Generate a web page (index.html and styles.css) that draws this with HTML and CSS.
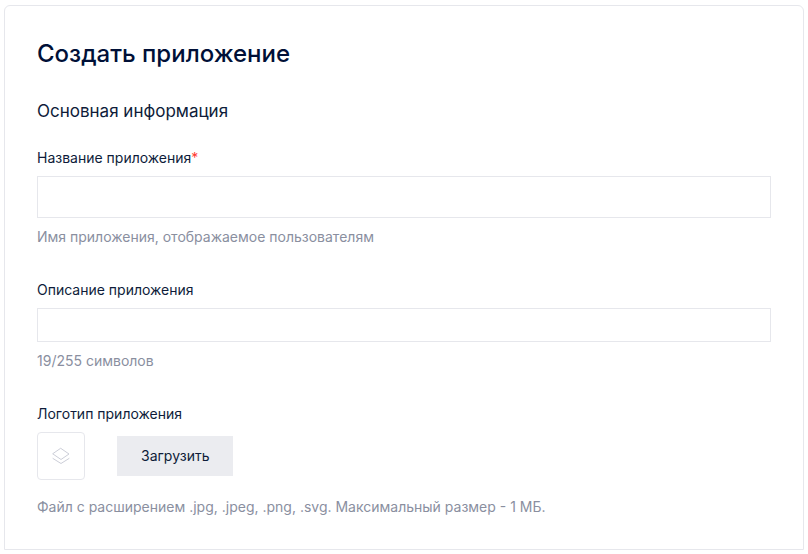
FILE: index.html
```html
<!DOCTYPE html>
<html lang="ru">
<head>
  <meta charset="UTF-8">
  <meta name="viewport" content="width=device-width, initial-scale=1.0">
  <title>Создать приложение</title>
  <link rel="stylesheet" href="styles.css">
</head>
<body>

  <main class="card">
    <h1>Создать приложение</h1>
    <h2>Основная информация</h2>

    <form>
      <!-- App name -->
      <div class="field">
        <label for="app-name">Название приложения<span class="required">*</span></label>
        <input type="text" id="app-name" class="input input-large" required>
        <p class="hint">Имя приложения, отображаемое пользователям</p>
      </div>

      <!-- App description -->
      <div class="field">
        <label for="app-description">Описание приложения</label>
        <input type="text" id="app-description" class="input" maxlength="255">
        <p class="hint">19/255 символов</p>
      </div>

      <!-- App logo -->
      <div class="field">
        <span class="label">Логотип приложения</span>
        <div class="upload">
          <div class="preview">
            <svg width="20" height="20" viewBox="0 0 20 20" fill="none" stroke="#ccced8" stroke-linejoin="round" stroke-linecap="round">
              <path d="M10 2.5 L18 8 L10 13.5 L2 8 Z"/>
              <path d="M2 12.5 L10 17.5 L18 12.5"/>
            </svg>
          </div>
          <button type="button" class="upload-btn">Загрузить</button>
        </div>
        <p class="hint">Файл с расширением .jpg, .jpeg, .png, .svg. Максимальный размер - 1 МБ.</p>
      </div>
    </form>
  </main>

</body>
</html>
```
FILE: styles.css
```css
* {
  margin: 0;
  padding: 0;
  box-sizing: border-box;
}

body {
  padding: 5px 4px 4px;
  background-color: #fff;
  color: #0e1c3a;
  font-family: 'Inter', sans-serif;
  font-size: 14px;
  line-height: 20px;
}

.card {
  padding: 32px;
  border: 1px solid #e6e7ec;
  border-radius: 6px 6px 0 0;
}

h1 {
  margin-bottom: 29px;
  color: #001037;
  font-size: 24px;
  font-weight: 500;
  line-height: 32px;
}

h2 {
  margin-bottom: 25px;
  font-size: 17px;
  font-weight: 400;
  line-height: 24px;
}

.field {
  margin-bottom: 33px;
}

.field:last-child {
  margin-bottom: 0;
}

.field label,
.field .label {
  display: block;
  margin-bottom: 8px;
}

.required {
  color: #ff3b30;
}

.input {
  display: block;
  width: 100%;
  height: 34px;
  padding: 0 12px;
  border: 1px solid #e6e7ec;
  background-color: #fff;
  font: inherit;
}

.input-large {
  height: 42px;
}

.hint {
  margin-top: 9px;
  color: #8a8f9f;
}

.upload {
  display: flex;
  align-items: center;
  gap: 32px;
  margin-bottom: 17px;
}

.preview {
  display: flex;
  align-items: center;
  justify-content: center;
  width: 48px;
  height: 48px;
  border: 1px solid #e6e7ec;
  border-radius: 4px;
}

.upload-btn {
  padding: 10px 24px;
  border: none;
  background-color: #ebecf0;
  color: #0e1c3a;
  font: inherit;
  cursor: pointer;
}
```
